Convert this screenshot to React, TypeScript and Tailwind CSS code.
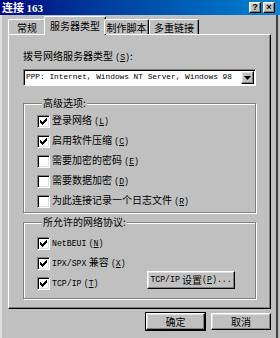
const cjk = "font-['SimSun','Noto_Sans_CJK_SC',sans-serif]";

const M = ({ children }: { children: React.ReactNode }) => (
  <span className="font-['Liberation_Mono',monospace] text-[8.2px]">{children}</span>
);

const Key = ({ k }: { k: string }) => (
  <M>
    (<span className="underline">{k}</span>)
  </M>
);

const Check = ({ on }: { on?: boolean }) => (
  <div className="w-[13px] h-[13px] shrink-0 bg-white border border-t-[#808080] border-l-[#808080] border-b-white border-r-white shadow-[inset_1px_1px_0_#000,inset_-1px_-1px_0_#dfdfdf] flex items-center justify-center">
    {on && (
      <svg width="7" height="7" viewBox="0 0 7 7">
        <path d="M0 2h1v1h1v1h1v-1h1v-1h1v-1h1v-1h1v3h-1v1h-1v1h-1v1h-1v1h-1v-1h-1v-1h-1z" fill="#000" />
      </svg>
    )}
  </div>
);

const Row = ({ on, children }: { on?: boolean; children: React.ReactNode }) => (
  <div className="h-[20px] flex items-center gap-[2px]">
    <Check on={on} />
    <span className="leading-none">{children}</span>
  </div>
);

const raised =
  "bg-[#c0c0c0] border border-t-white border-l-white border-r-black border-b-black shadow-[inset_-1px_-1px_0_#808080,inset_1px_1px_0_#dfdfdf]";

const tabs = [
  { label: "常规", w: "w-[38px]" },
  { label: "服务器类型", w: "w-[62px]", active: true },
  { label: "制作脚本", w: "w-[45px]" },
  { label: "多重链接", w: "w-[50px]" },
];

export default function App() {
  return (
    <div className={`w-[280px] h-[338px] bg-[#c0c0c0] flex flex-col text-[10px] text-black ${cjk}`}>
      {/* title bar */}
      <div className="h-[15px] shrink-0 bg-linear-to-r from-[#000080] to-[#1084d0] flex items-center pl-[2px] pr-[5px]">
        <span className="text-white font-bold text-[11px] leading-none">
          连接 <span className="font-['Liberation_Serif',serif]">163</span>
        </span>
        <div className="ml-auto flex gap-[2px]">
          <div className={`${raised} w-[12px] h-[11px] flex items-center justify-center text-[9px] font-bold leading-none font-['Liberation_Sans',sans-serif]`}>
            ?
          </div>
          <div className={`${raised} w-[12px] h-[11px] flex items-center justify-center text-[9px] font-bold leading-none font-['Liberation_Sans',sans-serif]`}>
            ×
          </div>
        </div>
      </div>

      <div className="flex-1 flex flex-col border-l-2 border-l-[#dfdfdf] border-r-2 border-r-[#404040] mr-[2px]">
        {/* tabs */}
        <div className="h-[19px] flex items-end ml-[6px] relative z-10">
          {tabs.map((t) =>
            t.active ? (
              <div
                key={t.label}
                className={`${t.w} h-[19px] -mx-[2px] -mb-[1px] bg-[#c0c0c0] border-t border-l border-t-white border-l-white border-r border-r-black shadow-[inset_-1px_0_0_#808080] rounded-t-[2px] flex items-center justify-center pb-[2px]`}
              >
                {t.label}
              </div>
            ) : (
              <div
                key={t.label}
                className={`${t.w} h-[15px] bg-[#c0c0c0] border-t border-l border-t-white border-l-white border-r border-r-black shadow-[inset_-1px_0_0_#808080] rounded-t-[2px] flex items-center justify-center`}
              >
                {t.label}
              </div>
            )
          )}
        </div>

        {/* panel */}
        <div className="ml-[6px] w-[263px] h-[275px] border border-t-white border-l-white border-r-black border-b-black shadow-[inset_-1px_-1px_0_#808080] pl-[14px] pt-[15px]">
          <div className="h-[12px] leading-[12px]">
            拨号网络服务器类型 <Key k="S" />:
          </div>

          <div className="mt-[7px] w-[233px] h-[17px] bg-white border border-t-[#808080] border-l-[#808080] border-b-white border-r-white shadow-[inset_1px_1px_0_#000] flex items-center">
            <span className="pl-[2px] flex-1 leading-none whitespace-nowrap font-['Liberation_Mono',monospace] text-[7.8px]">
              PPP: Internet, Windows NT Server, Windows 98
            </span>
            <div className={`${raised} w-[13px] h-[13px] mr-[1px] flex items-center justify-center shrink-0`}>
              <svg width="7" height="4" viewBox="0 0 7 4">
                <path d="M0 0h7l-3.5 4z" fill="#000" />
              </svg>
            </div>
          </div>

          <fieldset className="mt-[11px] w-[233px] h-[116px] border border-[#808080] shadow-[inset_1px_1px_0_#fff,1px_1px_0_#fff] pl-[13px] pt-[2px]">
            <legend className="ml-[5px] px-[1px] leading-[12px] bg-[#c0c0c0]">高级选项:</legend>
            <Row on>
              登录网络 <Key k="L" />
            </Row>
            <Row on>
              启用软件压缩 <Key k="C" />
            </Row>
            <Row>
              需要加密的密码 <Key k="E" />
            </Row>
            <Row>
              需要数据加密 <Key k="D" />
            </Row>
            <Row>
              为此连接记录一个日志文件 <Key k="R" />
            </Row>
          </fieldset>

          <fieldset className="mt-[3px] w-[233px] h-[83px] border border-[#808080] shadow-[inset_1px_1px_0_#fff,1px_1px_0_#fff] pl-[13px] pt-[5px]">
            <legend className="ml-[5px] px-[1px] leading-[12px] bg-[#c0c0c0]">所允许的网络协议:</legend>
            <div className="flex">
              <div className="w-[110px]">
                <Row on>
                  <M>NetBEUI</M> <Key k="N" />
                </Row>
                <Row on>
                  <M>IPX/SPX</M> 兼容 <Key k="X" />
                </Row>
                <Row on>
                  <M>TCP/IP</M> <Key k="T" />
                </Row>
              </div>
              <div
                className={`${raised} self-end mb-[4px] w-[88px] h-[18px] flex items-center justify-center leading-none whitespace-nowrap`}
              >
                <M>TCP/IP</M>&nbsp;设置<Key k="P" />
                <M>...</M>
              </div>
            </div>
          </fieldset>
        </div>

        {/* buttons */}
        <div className="mt-[4px] ml-[6px] w-[263px] flex justify-end gap-[6px]">
          <div className={`${raised} ring-1 ring-black w-[59px] h-[17px] flex items-center justify-center leading-none`}>
            确定
          </div>
          <div className={`${raised} w-[60px] h-[17px] flex items-center justify-center leading-none`}>
            取消
          </div>
        </div>
      </div>
    </div>
  );
}
